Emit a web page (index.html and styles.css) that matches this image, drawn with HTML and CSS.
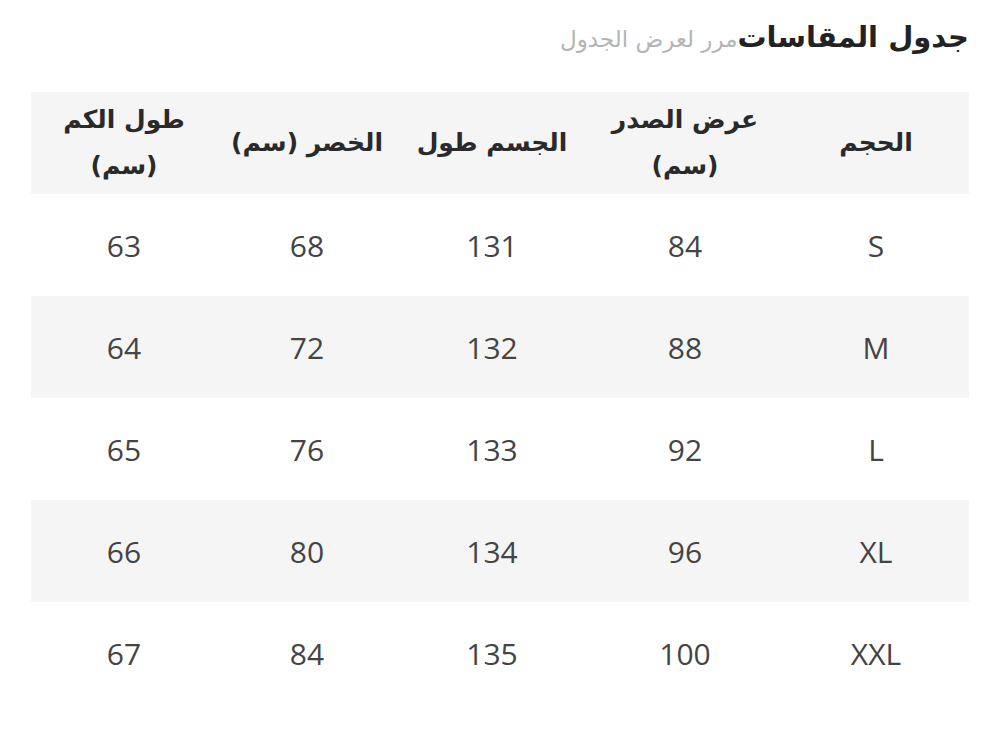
FILE: index.html
```html
<!DOCTYPE html>
<html lang="ar" dir="rtl">
<head>
<meta charset="utf-8">
<link rel="stylesheet" href="styles.css">
</head>
<body>
<div class="page">
  <div class="title-bar">
    <h1 class="title">جدول المقاسات</h1><span class="hint">مرر لعرض الجدول</span>
  </div>
  <div class="table">
    <div class="row head">
      <div class="cell">الحجم</div>
      <div class="cell">عرض الصدر<br>(سم)</div>
      <div class="cell">الجسم طول</div>
      <div class="cell">الخصر (سم)</div>
      <div class="cell">طول الكم<br>(سم)</div>
    </div>
    <div class="row"><div class="cell">S</div><div class="cell">84</div><div class="cell">131</div><div class="cell">68</div><div class="cell">63</div></div>
    <div class="row alt"><div class="cell">M</div><div class="cell">88</div><div class="cell">132</div><div class="cell">72</div><div class="cell">64</div></div>
    <div class="row"><div class="cell">L</div><div class="cell">92</div><div class="cell">133</div><div class="cell">76</div><div class="cell">65</div></div>
    <div class="row alt"><div class="cell">XL</div><div class="cell">96</div><div class="cell">134</div><div class="cell">80</div><div class="cell">66</div></div>
    <div class="row"><div class="cell">XXL</div><div class="cell">100</div><div class="cell">135</div><div class="cell">84</div><div class="cell">67</div></div>
  </div>
</div>
</body>
</html>
```
FILE: styles.css
```css
html, body {
  margin: 0;
  padding: 0;
  background: #ffffff;
}
body {
  font-family: "Open Sans", "DejaVu Sans", sans-serif;
  color: #333333;
}
.page {
  padding: 0 31px;
}
.title-bar {
  display: flex;
  align-items: baseline;
  height: 92px;
  padding-top: 13px;
  box-sizing: border-box;
}
.title {
  margin: 0;
  font-family: "DejaVu Sans", sans-serif;
  font-weight: bold;
  font-size: 29px;
  line-height: 48px;
  color: #222222;
}
.hint {
  font-family: "DejaVu Sans", sans-serif;
  font-size: 23px;
  color: #b4b4b4;
}
.table {
  display: flex;
  flex-direction: column;
}
.row {
  display: grid;
  grid-template-columns: 186px 196px 190px 180px 1fr;
  height: 102px;
  align-items: center;
}
.row.head, .row.alt {
  background: #f5f5f5;
}
.cell {
  text-align: center;
  font-size: 30px;
  color: #444444;
}
.head .cell {
  font-family: "DejaVu Sans", sans-serif;
  font-weight: bold;
  font-size: 25px;
  line-height: 46px;
  color: #2a2a2a;
}
```
